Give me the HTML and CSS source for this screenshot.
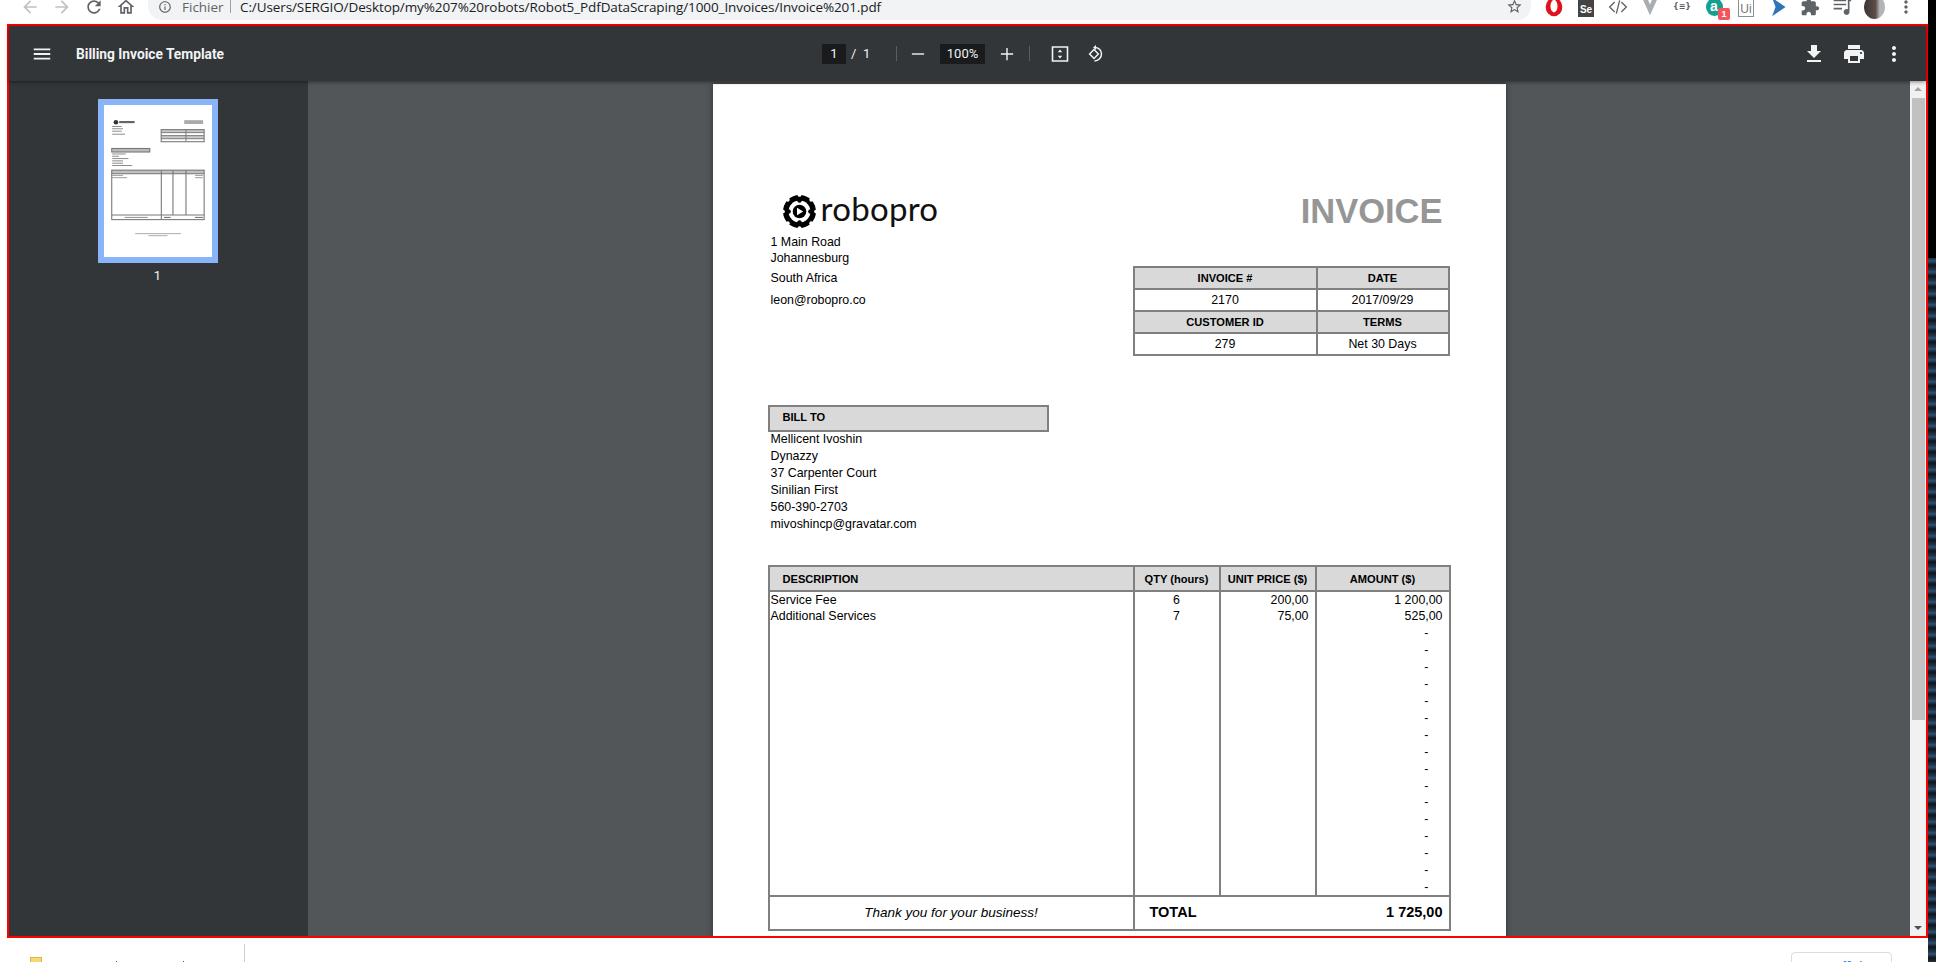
FILE: index.html
```html
<!DOCTYPE html>
<html lang="fr">

<head>
  <meta charset="UTF-8">
  <meta name="viewport" content="width=device-width, initial-scale=1.0">
  <title>Invoice 1.pdf</title>
  <link rel="stylesheet" href="styles.css">
</head>

<body>
  <div class="window">
    <!-- barre du navigateur -->
    <header class="chrome">
      <div class="slot off"><svg viewBox="0 0 24 24"><path d="M20 11H7.83l5.59-5.59L12 4l-8 8 8 8 1.41-1.41L7.83 13H20v-2z"/></svg></div>
      <div class="slot off"><svg viewBox="0 0 24 24"><path d="M12 4l-1.41 1.41L16.17 11H4v2h12.17l-5.58 5.59L12 20l8-8z"/></svg></div>
      <div class="slot"><svg viewBox="0 0 24 24"><path d="M17.65 6.35C16.2 4.9 14.21 4 12 4c-4.42 0-7.99 3.58-7.99 8s3.57 8 7.99 8c3.73 0 6.84-2.55 7.73-6h-2.08c-.82 2.33-3.04 4-5.65 4-3.31 0-6-2.69-6-6s2.69-6 6-6c1.66 0 3.14.69 4.22 1.78L13 11h7V4l-2.35 2.35z"/></svg></div>
      <div class="slot"><svg viewBox="0 0 24 24"><path d="M12 5.69l5 4.5V18h-2v-6H9v6H7v-7.81l5-4.5M12 3L2 12h3v8h6v-6h2v6h6v-8h3L12 3z"/></svg></div>
      <div class="omnibox">
        <svg class="omni-icon" viewBox="0 0 24 24"><path d="M11 7h2v2h-2zm0 4h2v6h-2zm1-9C6.48 2 2 6.48 2 12s4.48 10 10 10 10-4.48 10-10S17.52 2 12 2zm0 18c-4.41 0-8-3.59-8-8s3.59-8 8-8 8 3.59 8 8-3.59 8-8 8z"/></svg>
        <span class="scheme">Fichier</span>
        <span class="omni-sep"></span>
        <span class="url">C:/Users/SERGIO/Desktop/my%207%20robots/Robot5_PdfDataScraping/1000_Invoices/Invoice%201.pdf</span>
        <svg class="star" viewBox="0 0 24 24"><path d="M22 9.24l-7.19-.62L12 2 9.19 8.63 2 9.24l5.46 4.73L5.82 21 12 17.27 18.18 21l-1.63-7.03L22 9.24zM12 15.4l-3.76 2.27 1-4.28-3.32-2.88 4.38-.38L12 6.1l1.71 4.04 4.38.38-3.32 2.88 1 4.28L12 15.4z"/></svg>
      </div>
      <div class="extensions">
        <div class="slot"><svg viewBox="0 0 24 24"><ellipse cx="12" cy="12" rx="10" ry="11" fill="#e0101c"/><ellipse cx="12" cy="11" rx="4.2" ry="7.5" fill="#fff"/></svg></div>
        <div class="slot"><span class="ext-se">Se</span></div>
        <div class="slot"><svg viewBox="0 0 24 24"><path d="M8 6l-6 6 6 6M16 6l6 6-6 6M14 4l-4 16" fill="none" stroke="#5f6368" stroke-width="1.6"/></svg></div>
        <div class="slot"><svg viewBox="0 0 24 24"><path d="M3 2h18l-9 20z" fill="#a9adb1"/><path d="M9 2h6l-3 7z" fill="#fff"/></svg></div>
        <div class="slot"><span class="ext-json">{≡}</span></div>
        <div class="slot"><span class="ext-a">a</span><span class="badge">1</span></div>
        <div class="slot"><span class="ext-ui">Ui</span></div>
        <div class="slot"><svg viewBox="0 0 24 24"><path d="M5 1l16 11-16 11 4-11z" fill="#2d74b8"/></svg></div>
        <div class="slot"><svg viewBox="0 0 24 24"><path d="M20.5 11H19V7c0-1.1-.9-2-2-2h-4V3.5C13 2.12 11.88 1 10.5 1S8 2.12 8 3.5V5H4c-1.1 0-1.99.9-1.99 2v3.8H3.5c1.49 0 2.7 1.21 2.7 2.7s-1.21 2.7-2.7 2.7H2V20c0 1.1.9 2 2 2h3.8v-1.5c0-1.49 1.21-2.7 2.7-2.7 1.49 0 2.7 1.21 2.7 2.7V22H17c1.1 0 2-.9 2-2v-4h1.5c1.38 0 2.5-1.12 2.5-2.5S21.88 11 20.5 11z"/></svg></div>
        <div class="slot"><svg viewBox="0 0 24 24"><path d="M2 3h15v2H2zM2 8h15v2H2zM2 13h10v2H2zM19 2h4v3h-2v13a3.5 3.5 0 1 1-2-3.2z"/></svg></div>
        <div class="slot"><span class="avatar"></span></div>
        <div class="slot"><svg viewBox="0 0 24 24"><path d="M12 8c1.1 0 2-.9 2-2s-.9-2-2-2-2 .9-2 2 .9 2 2 2zm0 2c-1.1 0-2 .9-2 2s.9 2 2 2 2-.9 2-2-.9-2-2-2zm0 6c-1.1 0-2 .9-2 2s.9 2 2 2 2-.9 2-2-.9-2-2-2z"/></svg></div>
      </div>
    </header>

    <!-- visionneuse pdf, cadre rouge -->
    <div class="viewer">
      <div class="toolbar">
        <div class="tb-left">
          <svg class="tb-menu" viewBox="0 0 24 24"><path d="M3 18h18v-2H3v2zm0-5h18v-2H3v2zm0-7v2h18V6H3z"/></svg>
          <span class="doc-title">Billing Invoice Template</span>
        </div>
        <span class="page-box">1</span>
        <span class="slash">/</span>
        <span class="count">1</span>
        <span class="tb-sep first"></span>
        <svg class="tb-minus" viewBox="0 0 16 16"><path d="M1 7.2h14v1.6H1z"/></svg>
        <span class="zoom-box">100%</span>
        <svg class="tb-plus" viewBox="0 0 16 16"><path d="M7.2 1h1.6v6.2H15v1.6H8.8V15H7.2V8.8H1V7.2h6.2z"/></svg>
        <span class="tb-sep second"></span>
        <svg class="tb-fit" viewBox="0 0 18 18"><path d="M1.5 2h15v14h-15z" fill="none" stroke="#f1f3f4" stroke-width="1.6"/><path d="M9 4.5l2.2 2.7H6.8zM9 13.5l-2.2-2.7h4.4z"/></svg>
        <svg class="tb-rotate" viewBox="0 0 18 18"><path d="M8 4.5L3.6 9 8 13.5 12.4 9z" fill="none" stroke="#f1f3f4" stroke-width="1.5"/><path d="M9.5 2.4c3.4.3 6 3.1 6 6.6s-2.9 7-7 7" fill="none" stroke="#f1f3f4" stroke-width="1.5"/><path d="M10 0v5L7 2.5z"/></svg>
        <div class="tb-right">
          <svg viewBox="0 0 24 24"><path d="M19 9h-4V3H9v6H5l7 7 7-7zM5 18v2h14v-2H5z"/></svg>
          <svg viewBox="0 0 24 24"><path d="M19 8H5c-1.66 0-3 1.34-3 3v6h4v4h12v-4h4v-6c0-1.66-1.34-3-3-3zm-3 11H8v-5h8v5zm3-7c-.55 0-1-.45-1-1s.45-1 1-1 1 .45 1 1-.45 1-1 1zm-1-9H6v4h12V3z"/></svg>
          <svg viewBox="0 0 24 24"><path d="M12 8c1.1 0 2-.9 2-2s-.9-2-2-2-2 .9-2 2 .9 2 2 2zm0 2c-1.1 0-2 .9-2 2s.9 2 2 2 2-.9 2-2-.9-2-2-2zm0 6c-1.1 0-2 .9-2 2s.9 2 2 2 2-.9 2-2-.9-2-2-2z"/></svg>
        </div>
      </div>

      <div class="viewer-main">
        <aside class="sidebar">
          <div class="thumb">
            <svg class="thumb-page" viewBox="0 0 793 1122">
              <circle cx="86" cy="127" r="17" fill="#333"/>
              <rect x="110" y="118" width="114" height="16" fill="#666"/>
              <g fill="#888"><rect x="58" y="155" width="70" height="7"/><rect x="58" y="172" width="80" height="7"/><rect x="58" y="190" width="70" height="7"/><rect x="58" y="212" width="95" height="7"/></g>
              <rect x="590" y="112" width="140" height="28" fill="#aaa"/>
              <rect x="420" y="182" width="317" height="89" fill="#fff"/>
              <rect x="420" y="182" width="317" height="22" fill="#c8c8c8"/><rect x="420" y="226" width="317" height="22" fill="#c8c8c8"/>
              <path d="M603 182v89M420 204h317M420 226h317M420 249h317" stroke="#777" stroke-width="7"/>
              <rect x="420" y="182" width="317" height="89" fill="none" stroke="#777" stroke-width="8"/>
              <rect x="55" y="321" width="281" height="26" fill="#bbb" stroke="#777" stroke-width="8"/>
              <g fill="#888"><rect x="58" y="358" width="100" height="7"/><rect x="58" y="375" width="50" height="7"/><rect x="58" y="392" width="120" height="7"/><rect x="58" y="409" width="80" height="7"/><rect x="58" y="426" width="80" height="7"/><rect x="58" y="443" width="148" height="7"/></g>
              <rect x="55" y="481" width="682" height="365" fill="#fff"/>
              <rect x="55" y="481" width="682" height="27" fill="#c0c0c0"/>
              <path d="M421 481v365M507 481v331M603 481v331M55 508h682M55 812h682" stroke="#777" stroke-width="8"/>
              <rect x="55" y="481" width="682" height="365" fill="none" stroke="#777" stroke-width="8"/>
              <g fill="#999"><rect x="58" y="516" width="80" height="7"/><rect x="58" y="533" width="110" height="7"/><rect x="670" y="516" width="58" height="7"/><rect x="670" y="533" width="58" height="7"/></g>
              <rect x="150" y="826" width="170" height="8" fill="#999"/><rect x="440" y="826" width="50" height="8" fill="#777"/><rect x="670" y="826" width="58" height="8" fill="#777"/>
              <rect x="228" y="947" width="337" height="6" fill="#999"/><rect x="325" y="962" width="142" height="6" fill="#999"/>
            </svg>
          </div>
          <span class="thumb-num">1</span>
        </aside>

        <main class="content">
          <article class="page">
            <section class="top">
              <div class="top-left">
                <div class="logo">
                  <svg class="logo-mark" viewBox="0 0 32 32">
                    <circle cx="16" cy="16" r="16" fill="#000"/>
                    <g fill="#fff"><circle cx="16" cy="0" r="1.8"/><circle cx="16" cy="32" r="1.8"/><circle cx="0" cy="16" r="1.8"/><circle cx="32" cy="16" r="1.8"/><circle cx="4.7" cy="4.7" r="1.8"/><circle cx="27.3" cy="4.7" r="1.8"/><circle cx="4.7" cy="27.3" r="1.8"/><circle cx="27.3" cy="27.3" r="1.8"/></g>
                    <circle cx="16" cy="16" r="10.6" fill="#fff"/>
                    <g fill="#000"><circle cx="16" cy="5.4" r="2.2"/><circle cx="16" cy="26.6" r="2.2"/><circle cx="5.4" cy="16" r="2.2"/><circle cx="26.6" cy="16" r="2.2"/></g>
                    <circle cx="16" cy="16" r="6.6" fill="#000"/>
                    <path d="M13.6 12.4l6 3.6-6 3.6z" fill="#fff"/>
                  </svg>
                  <span class="logo-name">robopro</span>
                </div>
                <address class="addr">
                  <div>1 Main Road</div>
                  <div class="a2">Johannesburg</div>
                  <div class="a3">South Africa</div>
                  <div class="a4">leon@robopro.co</div>
                </address>
              </div>
              <div class="top-right">
                <h1 class="inv-title">INVOICE</h1>
                <table class="inv-meta">
                  <tr><th>INVOICE #</th><th>DATE</th></tr>
                  <tr><td>2170</td><td>2017/09/29</td></tr>
                  <tr><th>CUSTOMER ID</th><th>TERMS</th></tr>
                  <tr><td>279</td><td>Net 30 Days</td></tr>
                </table>
              </div>
            </section>

            <div class="bill-head">BILL TO</div>
            <div class="bill-lines">
              <div>Mellicent Ivoshin</div>
              <div>Dynazzy</div>
              <div>37 Carpenter Court</div>
              <div>Sinilian First</div>
              <div>560-390-2703</div>
              <div>mivoshincp@gravatar.com</div>
            </div>

            <table class="items">
              <colgroup><col class="c1"><col class="c2"><col class="c3"><col class="c4"></colgroup>
              <thead>
                <tr><th class="desc">DESCRIPTION</th><th>QTY (hours)</th><th>UNIT PRICE ($)</th><th>AMOUNT ($)</th></tr>
              </thead>
              <tbody>
                <tr><td>Service Fee</td><td class="qty">6</td><td class="num">200,00</td><td class="num">1 200,00</td></tr>
                <tr><td>Additional Services</td><td class="qty">7</td><td class="num">75,00</td><td class="num">525,00</td></tr>
                <tr><td></td><td></td><td></td><td class="dash">-</td></tr>
                <tr><td></td><td></td><td></td><td class="dash">-</td></tr>
                <tr><td></td><td></td><td></td><td class="dash">-</td></tr>
                <tr><td></td><td></td><td></td><td class="dash">-</td></tr>
                <tr><td></td><td></td><td></td><td class="dash">-</td></tr>
                <tr><td></td><td></td><td></td><td class="dash">-</td></tr>
                <tr><td></td><td></td><td></td><td class="dash">-</td></tr>
                <tr><td></td><td></td><td></td><td class="dash">-</td></tr>
                <tr><td></td><td></td><td></td><td class="dash">-</td></tr>
                <tr><td></td><td></td><td></td><td class="dash">-</td></tr>
                <tr><td></td><td></td><td></td><td class="dash">-</td></tr>
                <tr><td></td><td></td><td></td><td class="dash">-</td></tr>
                <tr><td></td><td></td><td></td><td class="dash">-</td></tr>
                <tr><td></td><td></td><td></td><td class="dash">-</td></tr>
                <tr><td></td><td></td><td></td><td class="dash">-</td></tr>
                <tr><td></td><td></td><td></td><td class="dash">-</td></tr>
              </tbody>
              <tfoot>
                <tr>
                  <td class="thanks">Thank you for your business!</td>
                  <td class="total" colspan="3"><div class="total-row"><span>TOTAL</span><span>1 725,00</span></div></td>
                </tr>
              </tfoot>
            </table>
          </article>
        </main>

        <div class="scrollbar">
          <span class="sb-up"></span>
          <span class="sb-thumb"></span>
          <span class="sb-down"></span>
        </div>
      </div>
    </div>

    <!-- barre de telechargement, coupee en bas -->
    <footer class="shelf">
      <span class="file-icon"></span>
      <span class="file-mark one"></span>
      <span class="file-mark two"></span>
      <span class="shelf-sep"></span>
      <span class="show-all">Tout afficher</span>
      <span class="shelf-close">×</span>
    </footer>
  </div>
  <div class="desktop"></div>
</body>

</html>
```

FILE: styles.css
```css
* {
  box-sizing: border-box;
}

html,
body {
  margin: 0;
  height: 962px;
  overflow: hidden;
}

body {
  display: flex;
  background: #000;
  font-family: "Liberation Sans", Arial, sans-serif;
}

.window {
  width: 1928px;
  height: 962px;
  background: #fff;
  display: flex;
  flex-direction: column;
  flex: none;
}

.desktop {
  flex: 1;
  margin-top: 258px;
  background: repeating-linear-gradient(180deg, #1c2c40 0, #32506e 3px, #0e141c 7px, #22303f 11px);
}

/* browser bar */
.chrome {
  height: 24px;
  flex: none;
  display: flex;
  align-items: flex-start;
  padding-left: 14px;
}

.slot {
  width: 32px;
  height: 14px;
  flex: none;
  display: flex;
  align-items: center;
  justify-content: center;
  position: relative;
  fill: #5f6368;
}

.slot svg {
  width: 20px;
  height: 20px;
  flex: none;
}

.slot.off {
  fill: #bdc1c6;
}

.omnibox {
  width: 1383px;
  height: 20px;
  margin-left: 6px;
  padding-left: 10px;
  display: flex;
  align-items: flex-start;
  background: #f1f3f4;
  border-radius: 0 0 14px 14px;
  overflow: hidden;
}

.omni-icon {
  width: 14px;
  height: 14px;
  fill: #5f6368;
  flex: none;
}

.scheme {
  margin-left: 10px;
  width: 47px;
  font: 13.5px/14px "Open Sans", sans-serif;
  color: #5f6368;
  white-space: nowrap;
  flex: none;
}

.omni-sep {
  width: 1px;
  height: 13px;
  margin-left: 1px;
  background: #9aa0a6;
  flex: none;
}

.url {
  margin-left: 9px;
  width: 642px;
  font: 13.5px/14px "Open Sans", sans-serif;
  letter-spacing: -0.1px;
  color: #202124;
  white-space: nowrap;
  flex: none;
}

.star {
  width: 17px;
  height: 17px;
  margin-left: auto;
  margin-right: 8px;
  margin-top: -2px;
  fill: #5f6368;
  flex: none;
}

.extensions {
  display: flex;
  margin-left: 7px;
}

.ext-se {
  width: 16px;
  height: 20px;
  background: #444;
  color: #fff;
  font: bold 10px/26px "Liberation Sans", sans-serif;
  text-align: center;
  flex: none;
}

.ext-json {
  font: bold 8px/14px "DejaVu Sans", sans-serif;
  color: #5f6368;
  white-space: nowrap;
}

.ext-a {
  width: 17px;
  height: 18px;
  border-radius: 50%;
  background: #14a08e;
  color: #fff;
  font: bold 14px/16px "Liberation Sans", sans-serif;
  text-align: center;
  flex: none;
}

.badge {
  position: absolute;
  left: 20px;
  top: 8px;
  width: 12px;
  height: 12px;
  border-radius: 2px;
  background: #f4555d;
  color: #fff;
  font: bold 9px/12px "Liberation Sans", sans-serif;
  text-align: center;
}

.ext-ui {
  width: 16px;
  height: 20px;
  border: 1px solid #8b8f93;
  color: #777;
  font: 12px/22px "Liberation Sans", sans-serif;
  text-align: center;
  flex: none;
}

.avatar {
  width: 21px;
  height: 24px;
  border-radius: 50%;
  background: linear-gradient(90deg, #3a3434 0, #5d4d47 55%, #b4b4b8 75%);
  flex: none;
}

/* viewer */
.viewer {
  height: 914px;
  flex: none;
  margin-left: 7px;
  border: 2px solid #f00;
  display: flex;
  flex-direction: column;
}

.toolbar {
  height: 55px;
  flex: none;
  display: flex;
  align-items: center;
  background: #323639;
  color: #f1f3f4;
  fill: #f1f3f4;
  box-shadow: 0 1px 4px rgba(0, 0, 0, 0.45);
  position: relative;
}

.tb-left {
  width: 813px;
  display: flex;
  align-items: center;
  padding-left: 22px;
  flex: none;
}

.tb-menu {
  width: 22px;
  height: 22px;
  flex: none;
}

.doc-title {
  margin-left: 23px;
  font: bold 13.75px Roboto, sans-serif;
  color: #f1f3f4;
}

.page-box {
  width: 24px;
  height: 20px;
  background: #191b1c;
  font: 13px/20px Roboto, sans-serif;
  text-align: center;
  flex: none;
}

.slash {
  margin-left: 5px;
  width: 5px;
  font: 13px Roboto, sans-serif;
  flex: none;
}

.count {
  margin-left: 7px;
  width: 8px;
  font: 13px Roboto, sans-serif;
  flex: none;
}

.tb-sep {
  width: 1px;
  height: 15px;
  background: #5a5e61;
  flex: none;
}

.tb-sep.first {
  margin-left: 25px;
}

.tb-sep.second {
  margin-left: 15px;
}

.tb-minus,
.tb-plus {
  width: 14px;
  height: 14px;
  flex: none;
}

.tb-minus {
  margin-left: 14px;
}

.tb-plus {
  margin-left: 15px;
}

.zoom-box {
  margin-left: 15px;
  width: 45px;
  height: 20px;
  background: #191b1c;
  font: 13px/20px Roboto, sans-serif;
  text-align: center;
  flex: none;
}

.tb-fit,
.tb-rotate {
  width: 18px;
  height: 18px;
  flex: none;
}

.tb-fit {
  margin-left: 21px;
}

.tb-rotate {
  margin-left: 17px;
}

.tb-right {
  margin-left: auto;
  padding-right: 20px;
  display: flex;
  gap: 16px;
}

.tb-right svg {
  width: 24px;
  height: 24px;
}

.viewer-main {
  flex: 1;
  display: flex;
  min-height: 0;
}

.sidebar {
  width: 299px;
  flex: none;
  background: #323639;
  padding-top: 18px;
  display: flex;
  flex-direction: column;
  align-items: center;
  padding-right: 2px;
}

.thumb {
  width: 120px;
  height: 164px;
  padding: 6px;
  background: #8ab4f8;
  flex: none;
}

.thumb-page {
  display: block;
  width: 108px;
  height: 152px;
  background: #fff;
}

.thumb-num {
  margin-top: 5px;
  font: 13px Roboto, sans-serif;
  color: #f1f3f4;
}

.content {
  flex: 1;
  background: #525659;
  display: flex;
  justify-content: center;
  overflow: hidden;
  padding-top: 3px;
}

.scrollbar {
  width: 16px;
  flex: none;
  background: #f1f1f1;
  display: flex;
  flex-direction: column;
  align-items: center;
}

.sb-up,
.sb-down {
  width: 0;
  height: 0;
  flex: none;
  border-left: 4px solid transparent;
  border-right: 4px solid transparent;
}

.sb-up {
  margin-top: 6px;
  border-bottom: 4px solid #a3a3a3;
}

.sb-thumb {
  width: 13px;
  height: 622px;
  margin-top: 7px;
  background: #c1c1c1;
  flex: none;
}

.sb-down {
  margin-top: auto;
  margin-bottom: 6px;
  border-top: 4px solid #505050;
}

/* invoice page */
.page {
  width: 793px;
  height: 1122px;
  padding: 111px 56px 0 55px;
  background: #fff;
  color: #000;
  font-size: 12.4px;
  line-height: 17px;
  flex: none;
  box-shadow: 0 0 6px rgba(0, 0, 0, 0.4);
}

.top {
  display: flex;
  justify-content: space-between;
  height: 210px;
}

.logo {
  height: 39px;
  display: flex;
  align-items: flex-start;
  padding-left: 15px;
}

.logo-mark {
  width: 33px;
  height: 33px;
  flex: none;
}

.logo-name {
  margin-left: 5px;
  font: 33px/26px Lato, sans-serif;
  letter-spacing: 0.3px;
  color: #111;
}

.addr {
  font-style: normal;
  padding-left: 3px;
}

.a2 {
  margin-top: -1px;
}

.a3 {
  margin-top: 3px;
}

.a4 {
  margin-top: 5px;
}

.top-right {
  width: 317px;
}

.inv-title {
  margin: 0;
  height: 71px;
  padding-right: 7px;
  font-size: 34.5px;
  line-height: 33px;
  font-weight: bold;
  text-align: right;
  color: #969696;
}

.inv-meta {
  width: 317px;
  border-collapse: collapse;
  table-layout: fixed;
}

.inv-meta th,
.inv-meta td {
  height: 22.1px;
  padding: 0;
  border: 2px solid #808080;
  text-align: center;
  line-height: 16px;
}

.inv-meta th {
  background: #d9d9d9;
  font-size: 11.1px;
}

.inv-meta th:first-child,
.inv-meta td:first-child {
  width: 183px;
}

.bill-head {
  width: 281px;
  height: 27px;
  padding-left: 13px;
  border: 2px solid #808080;
  background: #d9d9d9;
  font-size: 11.1px;
  font-weight: bold;
  line-height: 20px;
}

.bill-lines {
  margin-top: -1px;
  padding-left: 3px;
  height: 134px;
}

.items {
  width: 681px;
  border-collapse: collapse;
  table-layout: fixed;
}

.c1 {
  width: 365px;
}

.c2 {
  width: 86px;
}

.c3 {
  width: 96px;
}

.c4 {
  width: 134px;
}

.items th {
  height: 25px;
  padding: 0;
  border: 2px solid #808080;
  background: #d9d9d9;
  font-size: 11.1px;
  line-height: 16px;
  text-align: center;
}

.items th.desc {
  text-align: left;
  padding-left: 13px;
}

.items tbody td {
  height: 16.92px;
  padding: 1px 0 0 1px;
  border-left: 2px solid #808080;
  border-right: 2px solid #808080;
  line-height: 15px;
  white-space: nowrap;
}

.items td.qty {
  text-align: center;
  padding-left: 0;
}

.items td.num {
  text-align: right;
  padding-right: 6px;
}

.items td.dash {
  text-align: right;
  padding-right: 20px;
}

.items tfoot td {
  height: 34px;
  border: 2px solid #808080;
  padding: 0;
}

.items td.thanks {
  text-align: center;
  font-style: italic;
  font-size: 13.5px;
}

.total-row {
  display: flex;
  justify-content: space-between;
  padding: 0 6px 0 15px;
  font-size: 14.5px;
  font-weight: bold;
}

/* download shelf */
.shelf {
  height: 24px;
  flex: none;
  display: flex;
  align-items: flex-start;
  overflow: hidden;
}

.file-icon {
  width: 12px;
  height: 12px;
  margin: 19px 0 0 30px;
  background: #f8d775;
  border: 1px solid #d9b64e;
  flex: none;
}

.file-mark {
  width: 1px;
  height: 1px;
  margin-top: 23px;
  background: #555;
  flex: none;
}

.file-mark.one {
  margin-left: 74px;
}

.file-mark.two {
  margin-left: 66px;
}

.shelf-sep {
  width: 1px;
  height: 18px;
  margin: 6px 0 0 60px;
  background: #ccc;
  flex: none;
}

.show-all {
  width: 101px;
  height: 30px;
  margin: 14px 0 0 1546px;
  padding-top: 6px;
  border: 1px solid #dadce0;
  border-radius: 4px;
  color: #1a73e8;
  font: 13px/16px Roboto, sans-serif;
  text-align: center;
  flex: none;
}

.shelf-close {
  margin: 18px 0 0 8px;
  font: 20px/20px Roboto, sans-serif;
  color: #5f6368;
}
```
